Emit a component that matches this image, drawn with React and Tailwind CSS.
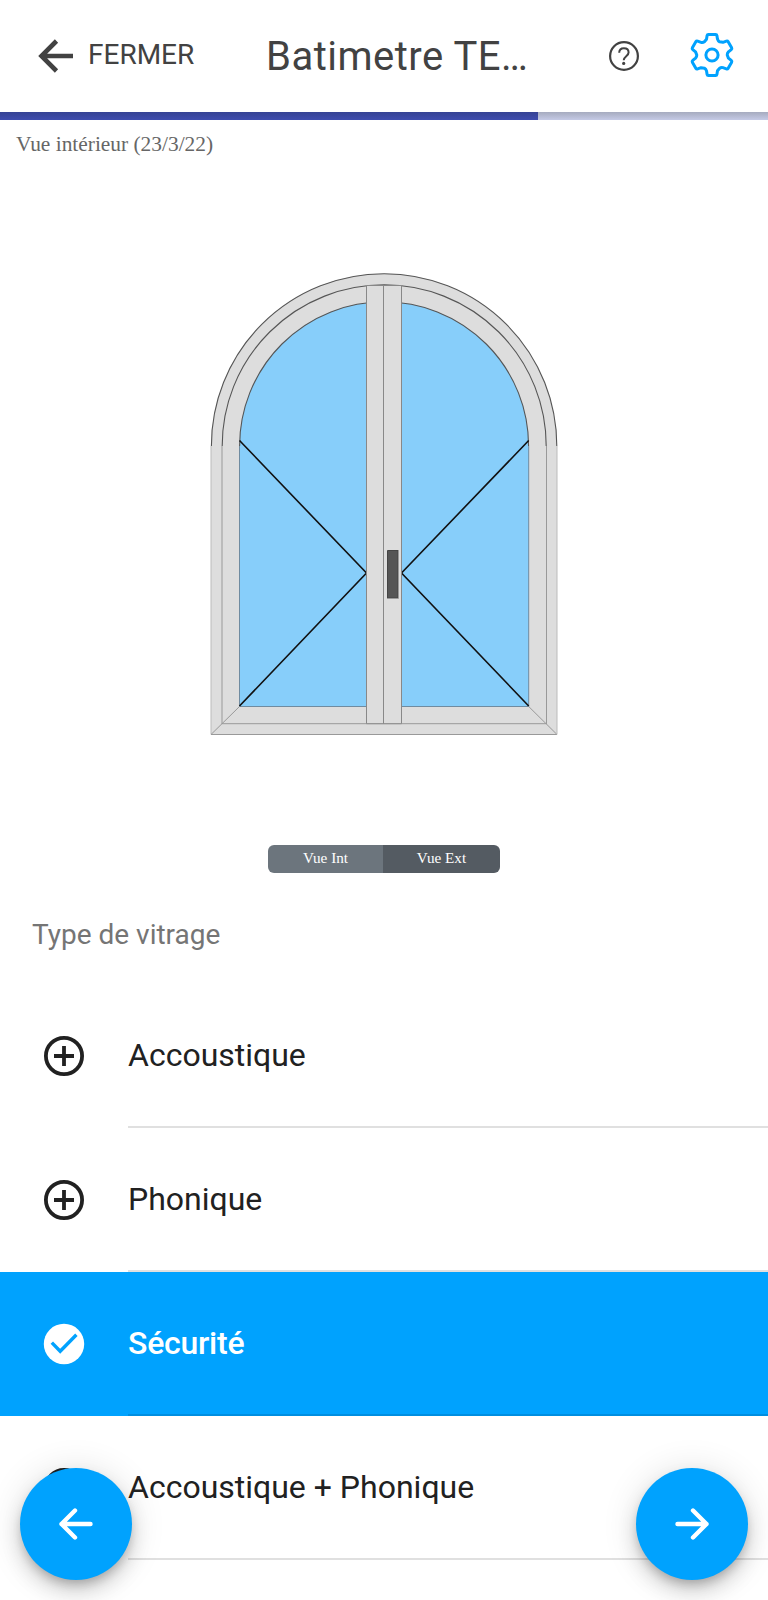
import React from "react";

function Gear() {
  const angles = [0, 60, 120, 180, 240, 300];
  const rot = (x, y, a) => {
    const r = (a * Math.PI) / 180;
    return `${(x * Math.cos(r) - y * Math.sin(r)).toFixed(2)} ${(x * Math.sin(r) + y * Math.cos(r)).toFixed(2)}`;
  };
  const d =
    angles
      .map((a, i) => {
        const p = (x, y) => rot(x, y, a);
        return `${i ? "L" : "M"}${p(-5.5, -15.8)} L${p(-4.9, -19.4)} Q${p(-4.7, -20.6)} ${p(-3.6, -20.6)} L${p(3.6, -20.6)} Q${p(4.7, -20.6)} ${p(4.9, -19.4)} L${p(5.5, -15.8)} Q${p(6, -14)} ${p(7.6, -13.2)}`;
      })
      .join(" ") + "Z";
  return (
    <svg className="h-12 w-12" viewBox="-24 -24 48 48" fill="none" stroke="#00a2fe" strokeWidth="3" strokeLinejoin="round">
      <path d={d} />
      <circle r="6.1" />
    </svg>
  );
}

function Help() {
  return (
    <svg className="h-9 w-9" viewBox="0 0 36 36" fill="none" stroke="#424242" strokeWidth="2.2">
      <circle cx="18" cy="18" r="13.9" />
      <path d="M13.2 14.8c0-2.8 1.9-4.6 4.7-4.6s4.7 1.6 4.7 4.3c0 3.5-4.9 3.9-4.9 7.7" strokeWidth="2" />
      <circle cx="17.7" cy="25.4" r="1.6" fill="#424242" stroke="none" />
    </svg>
  );
}

function PlusCircle() {
  return (
    <svg className="h-12 w-12" viewBox="0 0 48 48" fill="none" stroke="#212121" strokeWidth="3.8">
      <circle cx="24" cy="24" r="18.1" />
      <path d="M24 14v20M14 24h20" />
    </svg>
  );
}

function CheckCircle() {
  return (
    <svg className="h-12 w-12" viewBox="0 0 48 48">
      <circle cx="24" cy="24" r="20.2" fill="#fff" />
      <path d="M11.8 22.6l8.4 8.6 16.2-16.4" fill="none" stroke="#00a2fe" strokeWidth="3.4" />
    </svg>
  );
}

function WindowDrawing() {
  return (
    <svg className="h-[464px] w-[350px]" viewBox="209 272 350 464" fill="none">
      <path d="M211 734V446.500a173 173 0 0 1 346 0V734Z" fill="#ddd" />
      <path d="M239.500 706.500V446a144.600 144.300 0 0 1 289.200 0V706.500Z" fill="#87cefa" />
      <g stroke="#999" strokeWidth="1">
        <path d="M211 446V734.500" stroke="#bbb" />
        <path d="M211 734.500H557M222 446V724M546.500 446V724M222 723.700H546.500M211 734.500L239.500 706.500M557 734.500L528.700 706.500" />
        <path d="M557 446V734.500" stroke="#bbb" />
      </g>
      <path d="M239.500 446V706.500H528.700V446" stroke="#6f8ba0" />
      <g stroke="#555" strokeWidth="1.1">
        <path d="M211.400 446a172.700 172.300 0 0 1 345.400 0" />
        <path d="M222.200 446a162 161.200 0 0 1 324 0" />
        <path d="M239.600 446a144.500 144.300 0 0 1 289 0" />
      </g>
      <path d="M239.500 440.500L366.500 573L239.500 706M528.700 440.500L401.500 573L528.700 706" stroke="#111" strokeWidth="1.600" />
      <path d="M366.500 285.500H401.500V723.700H366.500Z" fill="#ddd" stroke="#888" />
      <path d="M383.500 285V723.700" stroke="#888" />
      <path d="M387.500 550.500H398V598H387.500Z" fill="#555" stroke="#444" />
      <path d="M398.500 550V598.500H387" stroke="#999" />
    </svg>
  );
}

function Row({ label, selected }) {
  return (
    <li className={selected ? "flex h-36 bg-[#00a2fe] pl-10 text-white" : "flex h-36 pl-10 text-[#212121]"}>
      <div className="flex w-[88px] items-center">{selected ? <CheckCircle /> : <PlusCircle />}</div>
      <div
        className={
          selected
            ? "flex flex-1 items-center border-b-2 border-[#008ee0] text-[32px] font-medium leading-10 tracking-[-0.25px]"
            : "flex flex-1 items-center border-b-2 border-[#e0e0e0] text-[32px] leading-10"
        }
      >
        {label}
      </div>
    </li>
  );
}

function Fab({ next }) {
  return (
    <button
      aria-label={next ? "Suivant" : "Précédent"}
      className="flex h-28 w-28 items-center justify-center rounded-full bg-[#00a2fe] shadow-[0_6px_10px_-2px_rgba(0,0,0,0.2),0_12px_20px_0_rgba(0,0,0,0.14),0_2px_36px_0_rgba(0,0,0,0.12)]"
    >
      <svg className="h-12 w-12" viewBox="0 0 48 48" fill="none" stroke="#fff" strokeWidth="4.400" strokeLinecap="round" strokeLinejoin="round">
        <path d={next ? "M9.500 24H38.500M25 10.500L38.500 24L25 37.500" : "M38.500 24H9.500M23 10.500L9.500 24L23 37.500"} />
      </svg>
    </button>
  );
}

export default function App() {
  return (
    <div className="relative h-[1600px] w-[768px] overflow-hidden bg-white font-[Roboto,sans-serif]">
      <header className="flex h-28 items-center text-[#424242]">
        <button className="flex w-[266px] items-center pl-[37px]">
          <svg className="h-10 w-10" viewBox="0 0 40 40" fill="none" stroke="#424242" strokeWidth="4.600">
            <path d="M36 20H4M19.500 5L4.500 20L19.500 35" />
          </svg>
          <span className="pb-[3px] pl-[11px] text-[28px] leading-8">FERMER</span>
        </button>
        <h1 className="w-[340px] whitespace-nowrap pt-[2px] text-[40px] leading-[48px] tracking-[0.5px]">Batimetre TE…</h1>
        <button aria-label="Aide"><Help /></button>
        <button aria-label="Paramètres" className="ml-[46px] pb-[2px]"><Gear /></button>
      </header>
      <div className="flex h-2 bg-gradient-to-b from-[#a6abbf] to-[#c5cae6]">
        <div className="w-[537.600px] bg-gradient-to-b from-[#354294] to-[#3f4cae]" />
      </div>
      <p className="h-[152px] pl-4 pt-3 font-['Liberation_Serif',serif] text-[21.400px] leading-6 text-[#666]">
        Vue intérieur (23/3/22)
      </p>
      <div className="flex h-[573px] justify-center">
        <WindowDrawing />
      </div>
      <div className="flex h-14 justify-center">
        <div className="flex h-7 w-[232px] overflow-hidden rounded-md font-['Liberation_Serif',serif] text-[15.200px] leading-[26px] text-white">
          <button className="w-[115px] bg-[#6c757d] pb-[2px]">Vue Int</button>
          <button className="w-[117px] bg-[#545b62] pb-[2px]">Vue Ext</button>
        </div>
      </div>
      <h2 className="h-[83px] pl-8 pt-[18px] text-[28px] leading-8 text-[#757575]">Type de vitrage</h2>
      <ul>
        <Row label="Accoustique" />
        <Row label="Phonique" />
        <Row label="Sécurité" selected />
        <Row label="Accoustique + Phonique" />
      </ul>
      <div className="absolute inset-x-5 bottom-5 flex justify-between">
        <Fab />
        <Fab next />
      </div>
    </div>
  );
}
